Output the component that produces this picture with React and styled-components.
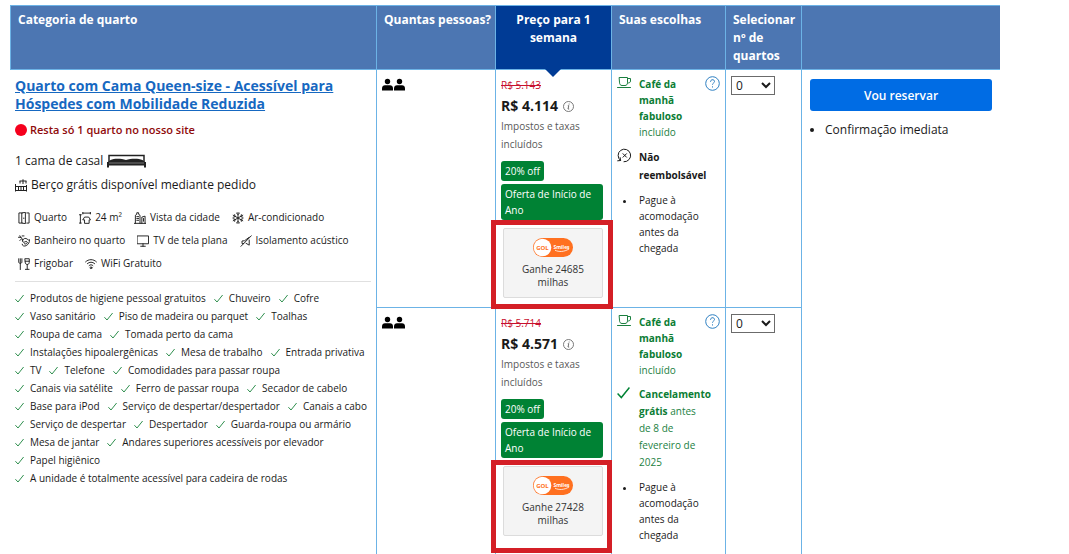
import React from "react";
import styled, { createGlobalStyle } from "styled-components";

const LINE = "#6cb3e6";
const GREEN = "#008234";

const GlobalStyle = createGlobalStyle`
  *, *::before, *::after { box-sizing: border-box; }
  body {
    margin: 0;
    background: #fff;
    color: #1a1a1a;
    font-family: "Open Sans", "Noto Sans", sans-serif;
    font-size: 10px;
    line-height: 16px;
  }
  ul, p, h3 { margin: 0; padding: 0; }
`;

const Page = styled.main`
  padding: 5px 69px 0 10px;
`;

const RoomTable = styled.table`
  width: 100%;
  height: calc(100vh - 5px);
  table-layout: fixed;
  border-collapse: separate;
  border-spacing: 0;
`;

const Col = styled.col`
  width: ${(p) => p.$width || "auto"};
`;

const HeadCell = styled.th`
  position: relative;
  height: 64px;
  padding: ${(p) => (p.$active ? "5px 7px 4px" : "5px 0 4px 7px")};
  vertical-align: top;
  text-align: ${(p) => (p.$active ? "center" : "left")};
  font-size: 12px;
  line-height: 18px;
  font-weight: 700;
  color: #fff;
  background: ${(p) => (p.$active ? "#003b95" : "#4c76b2")};
  border: solid ${LINE};
  border-width: 1px 0 1px 1px;
`;

const Notch = styled.span`
  position: absolute;
  top: 100%;
  left: 50%;
  margin-left: -9px;
  border: 8px solid transparent;
  border-top-color: #003b95;
  border-bottom: 0;
`;

const Cell = styled.td`
  height: ${(p) => p.$height || "auto"};
  padding: ${(p) => p.$pad || "6px 5px"};
  vertical-align: top;
  border-left: ${(p) => (p.$plain ? "0" : `1px solid ${LINE}`)};
  border-top: ${(p) => (p.$divided ? `1px solid ${LINE}` : "0")};
`;

const RoomTitle = styled.h3`
  font-size: 14px;
  line-height: 18px;
  font-weight: 700;
`;

const RoomLink = styled.a`
  color: #1668c1;
  text-decoration: underline;
`;

const Scarcity = styled.p`
  display: flex;
  align-items: center;
  gap: 3px;
  margin-top: 8px;
  font-size: 11px;
  line-height: 18px;
  font-weight: 600;
  color: #8f0a0a;
`;

const Dot = styled.span`
  width: 12px;
  height: 12px;
  border-radius: 50%;
  background: #f5001d;
`;

const BedLine = styled.p`
  display: flex;
  align-items: center;
  gap: 4px;
  margin-top: ${(p) => p.$top};
  font-size: 12px;
  line-height: 18px;
`;

const Facilities = styled.ul`
  display: flex;
  flex-wrap: wrap;
  column-gap: 12px;
  margin-top: 12px;
  padding: 0 0 6px 3px;
  list-style: none;
`;

const Facility = styled.li`
  display: flex;
  align-items: center;
  gap: 4px;
  line-height: 23px;
`;

const Amenities = styled.ul`
  display: flex;
  flex-wrap: wrap;
  column-gap: 8px;
  padding-top: 7px;
  border-top: 1px solid #e0e0e0;
  list-style: none;
`;

const Amenity = styled.li`
  display: flex;
  align-items: center;
  gap: 6px;
  line-height: 18px;
`;

const People = styled.span`
  display: flex;
  gap: 1px;
`;

const OldPrice = styled.del`
  display: block;
  line-height: 18px;
  color: #c8102e;
`;

const Price = styled.p`
  display: flex;
  align-items: center;
  gap: 5px;
  margin-top: 2px;
  font-size: 14px;
  line-height: 20px;
  font-weight: 700;
`;

const Taxes = styled.p`
  margin-top: 1px;
  line-height: 18px;
  color: #595959;
`;

const Badges = styled.div`
  display: flex;
  flex-direction: column;
  align-items: flex-start;
  gap: 3px;
  margin-top: 8px;
`;

const Badge = styled.span`
  padding: 2px 4px;
  border-radius: 3px;
  color: #fff;
  background: ${GREEN};
`;

const Miles = styled.div`
  position: relative;
  display: flex;
  flex-direction: column;
  align-items: center;
  height: 70px;
  margin: 8px 0 0 2px;
  padding-top: 9px;
  border: 1px solid #dcdcdc;
  border-radius: 2px;
  background: #f4f4f4;
  color: #333;
  text-align: center;
  line-height: 13px;
`;

const MilesText = styled.p`
  width: 70px;
  margin-top: 6px;
`;

const Highlight = styled.span`
  position: absolute;
  inset: ${(p) => p.$inset};
  border: 5px solid #d41f26;
`;

const Choices = styled.ul`
  display: flex;
  flex-direction: column;
  gap: 8px;
  list-style: none;
`;

const Choice = styled.li`
  display: grid;
  grid-template-columns: 15px 1fr auto;
  column-gap: 7px;
  color: ${(p) => (p.$green ? "#1b7f3f" : "#1a1a1a")};
`;

const ChoiceText = styled.span`
  white-space: pre-line;
  line-height: ${(p) => p.$line || "16px"};
  strong { color: ${(p) => (p.$green ? "#0b7d34" : "#1a1a1a")}; }
`;

const Bullet = styled.span`
  width: 3px;
  height: 3px;
  margin: 8px 0 0 6px;
  border-radius: 50%;
  background: #1a1a1a;
`;

const HelpButton = styled.button`
  width: 15px;
  height: 15px;
  padding: 0;
  border: 0;
  background: none;
`;

const SelectBox = styled.label`
  position: relative;
  display: block;
  width: 44px;
  height: 19px;
  svg { position: absolute; right: 4px; top: 6px; pointer-events: none; }
`;

const Select = styled.select`
  appearance: none;
  display: block;
  width: 100%;
  height: 100%;
  padding: 0 4px;
  border: 1px solid #6b6b6b;
  border-radius: 0;
  background: #fff;
  color: #1a1a1a;
  font: 12px "Open Sans", sans-serif;
`;

const ReserveButton = styled.button`
  width: 100%;
  height: 32px;
  border: 0;
  border-radius: 3px;
  background: #006ce4;
  color: #fff;
  font: 600 12px "Open Sans", sans-serif;
`;

const Perks = styled.ul`
  margin-top: 10px;
  padding-left: 15px;
  font-size: 12px;
  line-height: 18px;
`;

const Svg = ({ w = 12, h = 12, box = "0 0 13 13", children }) => (
  <svg width={w} height={h} viewBox={box} fill="none" stroke="currentColor" strokeWidth="1" strokeLinecap="round" strokeLinejoin="round" aria-hidden="true">
    {children}
  </svg>
);

const icons = {
  room: <><path d="M4.500 1H1v11h3.500M4.500 1l3.500-.7v12.400L4.500 12zM9.500 1H12v11H9.500" /><path d="M6.300 6.500v.6" /></>,
  size: <><path d="M1.500 3v9M.5 3h2M.5 12h2M4 1.200h8.500M4.200.3v1.800M12.300.3v1.800M6.500 5.500h4l2 3h-1.500v3.800H6V8.500H4.500z" /></>,
  city: <><path d="M1.500 12.300V3.500L3 2.500V.8h2v1.700l1.500 1v8.800M.3 12.300h12.400M8.500 12.300V5.500l3.500-1v7.800M3 5h2M3 7h2M3 9h2M10.300 7v3" /></>,
  snow: <><path d="M6.500.5v12M1.300 3.500l10.400 6M11.700 3.500l-10.400 6M4.800 1.200l1.700 1.600 1.700-1.600M4.800 11.800l1.700-1.600 1.700 1.600M1.200 5.700l2.200-.6-.5-2.200M11.800 7.300l-2.200.6.5 2.200M11.800 5.700l-2.200-.6.5-2.200M1.200 7.300l2.200.6-.5 2.200" /></>,
  bath: <><path d="M.5 2.500h3l1.500 3M2 .8l.7 1.700M4.500 1h2M3.500 4.500l-1.500 1.500M5 5.500c1-2 3.500-2.500 5-1s2.500 1 2.500.5c0 3-1 5-3.500 6.500-2 1-4.500.5-4.500-1.500M5 5.500c-1 2 1 3 2.500 2s3-.5 2.500 1-2 1.500-3 1" /></>,
  tv: <><path d="M.5 1h12v8.500H.5zM6.500 9.500v2.700M4 12.200h5" /></>,
  mute: <><path d="M12.300.8L1 12.300M4 9.300H2.200V6.500l2.800-.3 4.800-3.700M10 5.500v5.500L6.500 9" /></>,
  fridge: <><path d="M.8.800v3.500c0 1 .7 1.500 1.700 1.500s1.700-.5 1.700-1.500V.8M2.500.8v11.700M7.800.8h4.400v4c0 1.300-.9 2.200-2.200 2.200s-2.200-.9-2.200-2.200zM7.800 3.500h4.400M10 7v5M8 12.300h4" /></>,
  wifi: <><path d="M.6 4.200c3.300-3.300 8.500-3.300 11.800 0M2.500 6.200c2.300-2.200 5.700-2.200 8 0M4.400 8.200c1.200-1.200 3-1.200 4.200 0" /><circle cx="6.500" cy="10.600" r="1" /></>,
};

const Check = ({ size = 9, color = "#2f8f4e" }) => (
  <svg width={size} height={size} viewBox="0 0 9 9" fill="none" stroke={color} strokeWidth="1" aria-hidden="true">
    <path d="M.4 5.200L3 8 8.600 1" />
  </svg>
);

const Person = () => (
  <svg width="11" height="13" viewBox="0 0 11 13" fill="#000" aria-hidden="true">
    <circle cx="5.500" cy="3.500" r="2.700" />
    <path d="M0 12.500v-2.300C0 8.300 1.300 7.300 3 7.300h5c1.700 0 3 1 3 2.900v2.300z" />
  </svg>
);

const Bed = () => (
  <svg width="39" height="14" viewBox="0 0 39 14" fill="none" aria-hidden="true">
    <path d="M2 8V1.500h35V8" stroke="#222" strokeWidth="1.500" />
    <path d="M3.500 6c4-2 11-1.500 15.500 0 4.500-1.500 12-2 16.500 0l3 2.500H.5z" fill="#222" />
    <path d="M0 8h39v5.500h-2V11.500H2v2H0z" fill="#222" />
    <path d="M2 9h35" stroke="#777" strokeWidth="1" />
  </svg>
);

const Crib = () => (
  <svg width="12" height="13" viewBox="0 0 12 13" fill="none" stroke="#222" aria-hidden="true">
    <path d="M.5 5v7.500M11.500 6v6.500M.5 7.500h11M.5 11.500h11M3.500 7.500v4M6 7.500v4M8.500 7.500v4M4.500 2h7M8 .3v1.700M5 2v2.500M8 2v3M11 2v2.500" />
  </svg>
);

const Info = () => (
  <svg width="11" height="11" viewBox="0 0 11 11" fill="none" stroke="#6b6b6b" aria-hidden="true">
    <circle cx="5.500" cy="5.500" r="5" strokeWidth=".9" />
    <path d="M4.800 4.700h1L5 8h1.200M6.100 2.600v.9" />
  </svg>
);

const Cup = () => (
  <Svg w={15} h={13} box="0 0 15 13">
    <path d="M2.500 1.500h8v5c0 2-1 3-2.500 3H5c-1.500 0-2.500-1-2.500-3zM10.500 2.500h3v2.500c0 1.500-1 2-3 2M.5 11.500h13" />
  </Svg>
);

const NoRefund = () => (
  <Svg w={15} h={15} box="0 0 15 15">
    <path d="M3.500 12.500A6.300 6.300 0 1 1 7 13.800M.7 12.800l2.800-.3-.3-2.800M6 5.700l3.500 3.500M9.500 5.700L6 9.200" />
  </Svg>
);

const Help = () => (
  <svg width="15" height="15" viewBox="0 0 15 15" fill="none" stroke="#2f80c2" aria-hidden="true">
    <circle cx="7.500" cy="7.500" r="6.800" />
    <path d="M5.500 5.800c0-2.800 4-2.700 4-.3 0 1.500-2 1.500-2 3.200M7.500 10.300v1.200" />
  </svg>
);

const Arrow = () => (
  <svg width="10" height="7" viewBox="0 0 10 7" fill="none" stroke="#1a1a1a" strokeWidth="2" aria-hidden="true">
    <path d="M1 1l4 4 4-4" />
  </svg>
);

const MilesLogo = () => (
  <svg width="40" height="19" viewBox="0 0 40 19" role="img" aria-label="GOL Smiles">
    <rect width="40" height="19" rx="9.500" fill="#ff7020" />
    <circle cx="9.500" cy="9.500" r="8.800" fill="#fff" />
    <text x="9.500" y="12" textAnchor="middle" fontSize="6" fontWeight="700" fill="#ff7020" fontFamily="Open Sans">GOL</text>
    <text x="28.500" y="11" textAnchor="middle" fontSize="5" fontWeight="700" fill="#fff" fontFamily="Open Sans">Smiles</text>
    <path d="M22 12.200c4 2 9 1.700 14-1.200" fill="none" stroke="#fff" strokeWidth=".8" />
  </svg>
);

const facilities = [
  ["room", "Quarto"], ["size", "24 m²"], ["city", "Vista da cidade"], ["snow", "Ar-condicionado"],
  ["bath", "Banheiro no quarto"], ["tv", "TV de tela plana"], ["mute", "Isolamento acústico"],
  ["fridge", "Frigobar"], ["wifi", "WiFi Gratuito"],
];

const amenities = [
  "Produtos de higiene pessoal gratuitos", "Chuveiro", "Cofre",
  "Vaso sanitário", "Piso de madeira ou parquet", "Toalhas",
  "Roupa de cama", "Tomada perto da cama",
  "Instalações hipoalergênicas", "Mesa de trabalho", "Entrada privativa",
  "TV", "Telefone", "Comodidades para passar roupa",
  "Canais via satélite", "Ferro de passar roupa", "Secador de cabelo",
  "Base para iPod", "Serviço de despertar/despertador", "Canais a cabo",
  "Serviço de despertar", "Despertador", "Guarda-roupa ou armário",
  "Mesa de jantar", "Andares superiores acessíveis por elevador",
  "Papel higiênico", "A unidade é totalmente acessível para cadeira de rodas",
];

function Offer({ oldPrice, price, miles, inset, divided, height, children }) {
  return (
    <>
      <Cell $divided={divided} $height={height} $pad="8px 5px">
        <People role="img" aria-label="2 pessoas"><Person /><Person /></People>
      </Cell>
      <Cell $divided={divided} $pad="6px 8px 6px 5px">
        <OldPrice>{oldPrice}</OldPrice>
        <Price>{price} <Info /></Price>
        <Taxes>Impostos e taxas incluídos</Taxes>
        <Badges>
          <Badge>20% off</Badge>
          <Badge>Oferta de Início de Ano</Badge>
        </Badges>
        <Miles>
          <MilesLogo />
          <MilesText>Ganhe {miles} milhas</MilesText>
          <Highlight $inset={inset} />
        </Miles>
      </Cell>
      <Cell $divided={divided}>
        <Choices>
          <Choice $green>
            <Cup />
            <ChoiceText $green><strong>{"Café da\nmanhã\nfabuloso"}</strong>{"\nincluído"}</ChoiceText>
            <HelpButton type="button" aria-label="Ajuda"><Help /></HelpButton>
          </Choice>
          {children}
          <Choice>
            <Bullet />
            <ChoiceText>{"Pague à\nacomodação\nantes da\nchegada"}</ChoiceText>
          </Choice>
        </Choices>
      </Cell>
      <Cell $divided={divided}>
        <SelectBox>
          <Select aria-label="Número de quartos" defaultValue="0">
            <option>0</option>
            <option>1</option>
          </Select>
          <Arrow />
        </SelectBox>
      </Cell>
    </>
  );
}

export default function App() {
  return (
    <Page>
      <GlobalStyle />
      <RoomTable>
        <colgroup>
          <Col />
          <Col $width="119px" />
          <Col $width="116px" />
          <Col $width="114px" />
          <Col $width="76px" />
          <Col $width="199px" />
        </colgroup>
        <thead>
          <tr>
            <HeadCell>Categoria de quarto</HeadCell>
            <HeadCell>Quantas pessoas?</HeadCell>
            <HeadCell $active>Preço para 1 semana<Notch /></HeadCell>
            <HeadCell>Suas escolhas</HeadCell>
            <HeadCell>Selecionar nº de quartos</HeadCell>
            <HeadCell aria-label="Reserva" />
          </tr>
        </thead>
        <tbody>
          <tr>
            <Cell rowSpan={2} $plain $pad="7px 5px">
              <RoomTitle>
                <RoomLink href="#quarto">Quarto com Cama Queen-size - Acessível para Hóspedes com Mobilidade Reduzida</RoomLink>
              </RoomTitle>
              <Scarcity><Dot />Resta só 1 quarto no nosso site</Scarcity>
              <BedLine $top="13px">1 cama de casal <Bed /></BedLine>
              <BedLine $top="6px"><Crib />Berço grátis disponível mediante pedido</BedLine>
              <Facilities>
                {facilities.map(([icon, label]) => (
                  <Facility key={label}><Svg>{icons[icon]}</Svg>{label}</Facility>
                ))}
              </Facilities>
              <Amenities>
                {amenities.map((label) => (
                  <Amenity key={label}><Check />{label}</Amenity>
                ))}
              </Amenities>
            </Cell>
            <Offer height="237px" oldPrice="R$ 5.143" price="R$ 4.114" miles="24685" inset="-9px -11px -12px -13px">
              <Choice>
                <NoRefund />
                <ChoiceText $line="18px"><strong>{"Não\nreembolsável"}</strong></ChoiceText>
              </Choice>
            </Offer>
            <Cell rowSpan={2} $pad="9px 8px">
              <ReserveButton type="button">Vou reservar</ReserveButton>
              <Perks><li>Confirmação imediata</li></Perks>
            </Cell>
          </tr>
          <tr>
            <Offer divided oldPrice="R$ 5.714" price="R$ 4.571" miles="27428" inset="-7px -10px -18px -13px">
              <Choice $green>
                <Check size={13} color={GREEN} />
                <ChoiceText $green $line="17px"><strong>{"Cancelamento\ngrátis"}</strong>{" antes\nde 8 de\nfevereiro de\n2025"}</ChoiceText>
              </Choice>
            </Offer>
          </tr>
        </tbody>
      </RoomTable>
    </Page>
  );
}
